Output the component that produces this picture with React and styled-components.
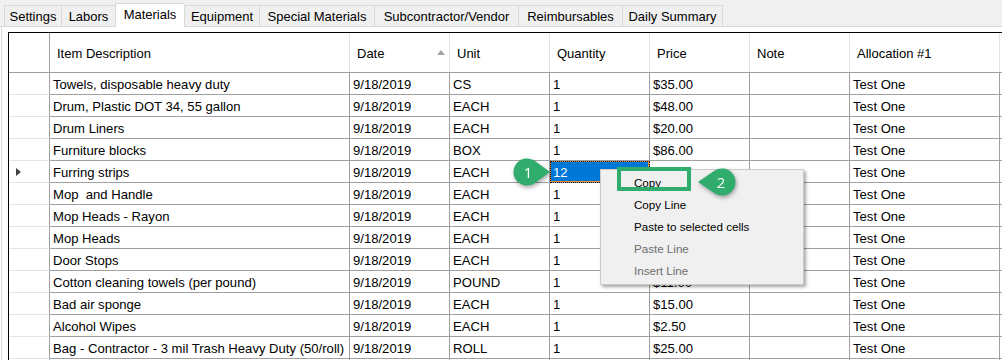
import React from "react";
import styled, { createGlobalStyle } from "styled-components";

const GlobalStyle = createGlobalStyle`
  html, body { margin: 0; padding: 0; background: #ffffff; }
  body { font-family: "Liberation Sans", Arial, sans-serif; }
  * { box-sizing: border-box; }
`;

const Page = styled.div`
  position: relative;
  width: 1002px;
  height: 360px;
  overflow: hidden;
  background: #ffffff;
`;

const TabStrip = styled.div`
  display: flex;
  align-items: flex-end;
  height: 27px;
  padding-left: 4px;
  background: #f0f0f0;
  border-bottom: 1px solid #d9d9d9;
`;

const Tab = styled.div`
  flex: none;
  width: ${(p) => p.$w}px;
  height: ${(p) => (p.$active ? 24 : 21)}px;
  margin-bottom: ${(p) => (p.$active ? -1 : 0)}px;
  display: flex;
  align-items: center;
  justify-content: center;
  padding-bottom: ${(p) => (p.$active ? 3 : 0)}px;
  font-size: 13px;
  color: #000;
  background: ${(p) => (p.$active ? "#ffffff" : "#f0f0f0")};
  border: 1px solid #d9d9d9;
  border-right: ${(p) => (p.$last ? "1px solid #d9d9d9" : "none")};
  border-bottom: none;
  position: relative;
  z-index: ${(p) => (p.$active ? 1 : 0)};
  white-space: nowrap;
`;

const Panel = styled.div`
  margin-left: 1px;
  border-left: 1px solid #dcdcdc;
  padding: 5px 0 0 6px;
  background: #ffffff;
`;

const Grid = styled.div`
  border-top: 1px solid #000;
  border-left: 1px solid #000;
`;

const COLS = "41px 300px 100px 100px 100px 100px 100px 150px 1fr";

const HeaderRow = styled.div`
  display: grid;
  grid-template-columns: ${COLS};
  height: 40px;
  border-bottom: 1px solid #a0a0a0;
`;

const HeaderCell = styled.div`
  position: relative;
  display: flex;
  align-items: center;
  padding: 2px 0 0 7px;
  font-size: 13px;
  color: #000;
  border-right: 1px solid ${(p) => (p.$corner ? "#a0a0a0" : "#e4e4e4")};
  white-space: nowrap;
`;

const SortArrow = styled.span`
  position: absolute;
  right: 4px;
  top: 17px;
  width: 0;
  height: 0;
  border-left: 4.5px solid transparent;
  border-right: 4.5px solid transparent;
  border-bottom: 5px solid #a3a3a3;
`;

const Row = styled.div`
  display: grid;
  grid-template-columns: ${COLS};
  height: 22px;
`;

const RowHead = styled.div`
  display: flex;
  align-items: center;
  padding-left: 7px;
  border-right: 1px solid #a0a0a0;
  border-bottom: 1px solid #e4e4e4;
`;

const Pointer = styled.span`
  width: 0;
  height: 0;
  border-top: 4.5px solid transparent;
  border-bottom: 4.5px solid transparent;
  border-left: 5px solid #404040;
`;

const Cell = styled.div`
  display: flex;
  align-items: center;
  padding: 1px 0 0 3px;
  font-size: 13.1px;
  color: ${(p) => (p.$selected ? "#ffffff" : "#000")};
  background: ${(p) => (p.$selected ? "#0078d7" : "transparent")};
  border-right: 1px solid #a0a0a0;
  border-bottom: 1px solid #a0a0a0;
  white-space: pre;
  overflow: hidden;
  ${(p) =>
    p.$selected &&
    `
    outline: 1px dotted #111;
    outline-offset: -1px;
    box-shadow: inset 0 0 0 1px #f08a24;
  `}
`;

const FillCell = styled.div`
  border-bottom: 1px solid #a0a0a0;
`;

const Menu = styled.div`
  position: absolute;
  left: 600px;
  top: 169px;
  width: 204px;
  padding: 1px 0 3px;
  background: #f0f0f0;
  border: 1px solid #cccccc;
  box-shadow: 2px 2px 3px rgba(0, 0, 0, 0.35);
  z-index: 5;
`;

const MenuItem = styled.div`
  height: 22px;
  display: flex;
  align-items: center;
  padding-left: 33px;
  font-size: 11.6px;
  color: ${(p) => (p.$disabled ? "#6d6d6d" : "#000")};
  white-space: nowrap;
`;

const Highlight = styled.div`
  position: absolute;
  left: 617px;
  top: 167px;
  width: 74px;
  height: 24px;
  border: 4px solid #30ad6c;
  z-index: 6;
`;

const Badge = styled.div`
  position: absolute;
  left: ${(p) => p.$x}px;
  top: ${(p) => p.$y}px;
  width: 40px;
  height: 30px;
  z-index: 7;
  filter: drop-shadow(1px 2px 2px rgba(0, 0, 0, 0.35));
  svg { display: block; }
`;

const BadgeLabel = styled.span`
  position: absolute;
  top: 0;
  height: 28px;
  left: ${(p) => p.$cx - 10}px;
  width: 20px;
  display: flex;
  align-items: center;
  justify-content: center;
  color: #ffffff;
  font-family: "Open Sans", "Liberation Sans", sans-serif;
  font-size: 15px;
`;

const GREEN = "#30ad6c";

function Callout({ x, y, label, dir }) {
  const r = 13.5;
  const cy = 14;
  if (dir === "right") {
    const cx = 14;
    const tipX = 37;
    const d = tipX - cx;
    const a = Math.acos(r / d);
    const tx = cx + r * Math.cos(a);
    const ty = r * Math.sin(a);
    const path = `M ${tx} ${cy - ty} L ${tipX} ${cy} L ${tx} ${cy + ty} A ${r} ${r} 0 1 1 ${tx} ${cy - ty} Z`;
    return (
      <Badge $x={x} $y={y}>
        <svg width="40" height="30" viewBox="0 0 40 30">
          <path d={path} fill={GREEN} />
        </svg>
        <BadgeLabel $cx={cx + 1}>{label}</BadgeLabel>
      </Badge>
    );
  }
  const cx = 25;
  const tipX = 1;
  const d = cx - tipX;
  const a = Math.acos(r / d);
  const tx = cx - r * Math.cos(a);
  const ty = r * Math.sin(a);
  const path = `M ${tx} ${cy - ty} L ${tipX} ${cy} L ${tx} ${cy + ty} A ${r} ${r} 0 1 0 ${tx} ${cy - ty} Z`;
  return (
    <Badge $x={x} $y={y}>
      <svg width="40" height="30" viewBox="0 0 40 30">
        <path d={path} fill={GREEN} />
      </svg>
      <BadgeLabel $cx={cx - 1}>{label}</BadgeLabel>
    </Badge>
  );
}

const tabs = [
  { name: "Settings", w: 57 },
  { name: "Labors", w: 54 },
  { name: "Materials", w: 69, active: true },
  { name: "Equipment", w: 75 },
  { name: "Special Materials", w: 115 },
  { name: "Subcontractor/Vendor", w: 144 },
  { name: "Reimbursables", w: 104 },
  { name: "Daily Summary", w: 101, last: true },
];

const headers = ["Item Description", "Date", "Unit", "Quantity", "Price", "Note", "Allocation #1"];

// Price values of rows fully hidden behind the context menu are left empty.
const rows = [
  ["Towels, disposable heavy duty", "CS", "1", "$35.00"],
  ["Drum, Plastic DOT 34, 55 gallon", "EACH", "1", "$48.00"],
  ["Drum Liners", "EACH", "1", "$20.00"],
  ["Furniture blocks", "BOX", "1", "$86.00"],
  ["Furring strips", "EACH", "12", "$12.00"],
  ["Mop  and Handle", "EACH", "1", ""],
  ["Mop Heads - Rayon", "EACH", "1", ""],
  ["Mop Heads", "EACH", "1", ""],
  ["Door Stops", "EACH", "1", ""],
  ["Cotton cleaning towels (per pound)", "POUND", "1", "$11.00"],
  ["Bad air sponge", "EACH", "1", "$15.00"],
  ["Alcohol Wipes", "EACH", "1", "$2.50"],
  ["Bag - Contractor - 3 mil Trash Heavy Duty (50/roll)", "ROLL", "1", "$25.00"],
  ["", "", "", ""],
];

const menuItems = [
  { label: "Copy" },
  { label: "Copy Line" },
  { label: "Paste to selected cells" },
  { label: "Paste Line", disabled: true },
  { label: "Insert Line", disabled: true },
];

export default function App() {
  return (
    <Page>
      <GlobalStyle />
      <TabStrip>
        {tabs.map((t) => (
          <Tab key={t.name} $w={t.w} $active={t.active} $last={t.last}>
            {t.name}
          </Tab>
        ))}
      </TabStrip>
      <Panel>
        <Grid>
          <HeaderRow>
            <HeaderCell $corner />
            {headers.map((h) => (
              <HeaderCell key={h}>
                {h}
                {h === "Date" && <SortArrow />}
              </HeaderCell>
            ))}
            <div />
          </HeaderRow>
          {rows.map((r, i) => {
            const current = i === 4;
            const blank = r[0] === "";
            return (
              <Row key={i}>
                <RowHead>{current && <Pointer />}</RowHead>
                <Cell>{r[0]}</Cell>
                <Cell>{blank ? "" : "9/18/2019"}</Cell>
                <Cell>{r[1]}</Cell>
                <Cell $selected={current}>{r[2]}</Cell>
                <Cell>{r[3]}</Cell>
                <Cell />
                <Cell>{blank ? "" : "Test One"}</Cell>
                <FillCell />
              </Row>
            );
          })}
        </Grid>
      </Panel>
      <Menu>
        {menuItems.map((m) => (
          <MenuItem key={m.label} $disabled={m.disabled}>
            {m.label}
          </MenuItem>
        ))}
      </Menu>
      <Highlight />
      <Callout x={513} y={158} label="1" dir="right" />
      <Callout x={697} y={168} label="2" dir="left" />
    </Page>
  );
}
